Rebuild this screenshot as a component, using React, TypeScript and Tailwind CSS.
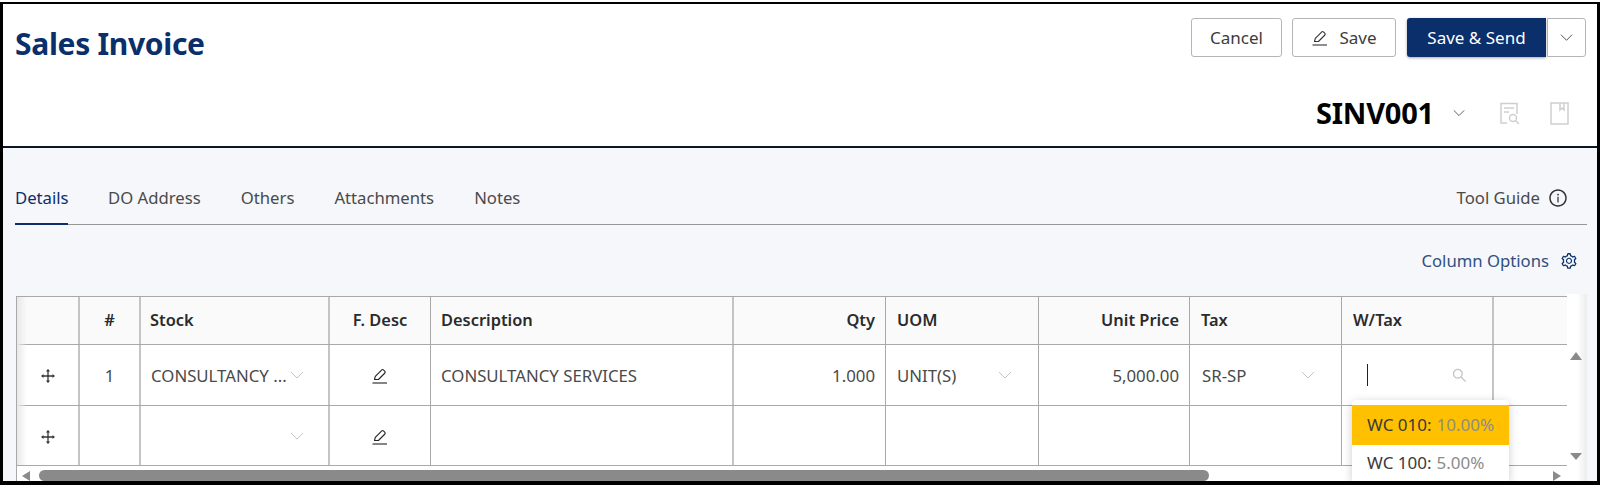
import React from "react";
import { AiOutlineDrag, AiOutlineSearch, AiOutlineSetting, AiOutlineInfoCircle } from "react-icons/ai";

const Chevron = ({ size = 14, color = "#c4c4c4", up = false }: { size?: number; color?: string; up?: boolean }) => (
  <svg width={size} height={size} viewBox="0 0 14 14" fill="none" stroke={color} strokeWidth="1" className={up ? "mb-[3px] shrink-0" : "shrink-0"}>
    <path d="M1 4 L7 10 L13 4" />
  </svg>
);

const Pencil = ({ size = 18, color = "#222" }: { size?: number; color?: string }) => (
  <svg width={size} height={size} viewBox="0 0 18 18" fill="none" stroke={color} strokeWidth="1.1">
    <path d="M3.5 12.5 L4.3 9.4 L10.8 2.9 Q11.6 2.2 12.4 2.9 L13.9 4.4 Q14.6 5.2 13.9 6 L7.4 12.5 Z" strokeLinejoin="round" />
    <path d="M1.5 16 H16" />
  </svg>
);

const DocSearch = () => (
  <svg width="21" height="23" viewBox="0 0 21 23" fill="none" stroke="#cfcfcf" strokeWidth="1.5">
    <path d="M8 21 H2 V1.5 H18 V12" />
    <path d="M5 6 H15 M5 10 H10" />
    <circle cx="14" cy="16" r="3.5" />
    <path d="M16.5 18.5 L20 22" />
  </svg>
);

const BookMark = () => (
  <svg width="19" height="23" viewBox="0 0 19 23" fill="none" stroke="#cfcfcf" strokeWidth="1.5">
    <rect x="1" y="1" width="17" height="21" />
    <path d="M10 1 V8 L12 6 L14 8 V1" />
  </svg>
);

const colClass =
  "grid grid-cols-[63px_61px_189px_101px_303px_152px_153px_151px_152px_152px_74px]";
const cell = "border-r border-[#a9a9a9] flex items-center min-w-0";
const thick = "border-r-2 border-[#c4c4c4] flex items-center min-w-0";
const head = "text-[16.4px] font-semibold text-[#2b2b2b]";
const body = "text-[16.8px] text-[#4a4a4a]";

const Move = () => <AiOutlineDrag size={18} color="#333" />;

function Header() {
  return (
    <div className={`${colClass} h-[48px] bg-[#fafafa] border-b border-[#a9a9a9] ${head}`}>
      <div className={thick} />
      <div className={`${thick} justify-center`}>#</div>
      <div className={`${thick} pl-[9px]`}>Stock</div>
      <div className={`${cell} justify-center`}>F. Desc</div>
      <div className={`${thick} pl-[10px]`}>Description</div>
      <div className={`${cell} justify-end pr-[10px]`}>Qty</div>
      <div className={`${cell} pl-[11px]`}>UOM</div>
      <div className={`${cell} justify-end pr-[10px]`}>Unit Price</div>
      <div className={`${cell} pl-[11px]`}>Tax</div>
      <div className={`${thick} pl-[11px]`}>W/Tax</div>
      <div />
    </div>
  );
}

function RowOne() {
  return (
    <div className={`${colClass} h-[61px] bg-white border-b border-[#a9a9a9] ${body}`}>
      <div className={`${thick} pt-[2px] justify-center`}><Move /></div>
      <div className={`${thick} pt-[2px] justify-center`}>1</div>
      <div className={`${thick} pt-[2px] pl-[10px] pr-[24px] justify-between`}>
        <span className="whitespace-nowrap">CONSULTANCY ...</span>
        <Chevron up />
      </div>
      <div className={`${cell} pt-[2px] justify-center`}><Pencil /></div>
      <div className={`${thick} pt-[2px] pl-[10px] whitespace-nowrap`}>CONSULTANCY SERVICES</div>
      <div className={`${cell} pt-[2px] justify-end pr-[10px]`}>1.000</div>
      <div className={`${cell} pt-[2px] pl-[11px] pr-[26px] justify-between`}>
        <span>UNIT(S)</span>
        <Chevron up />
      </div>
      <div className={`${cell} pt-[2px] justify-end pr-[10px]`}>5,000.00</div>
      <div className={`${cell} pt-[2px] pl-[12px] pr-[26px] justify-between`}>
        <span>SR-SP</span>
        <Chevron up />
      </div>
      <div className={`${thick} pl-[25px] pr-[24px] justify-between`}>
        <span className="w-px h-[22px] bg-[#222]" />
        <AiOutlineSearch size={17} color="#c4c4c4" />
      </div>
      <div />
    </div>
  );
}

function RowTwo() {
  return (
    <div className={`${colClass} h-[60px] bg-white border-b border-[#a9a9a9] ${body}`}>
      <div className={`${thick} pt-[2px] justify-center`}><Move /></div>
      <div className={thick} />
      <div className={`${thick} pr-[24px] justify-end`}><Chevron /></div>
      <div className={`${cell} pt-[2px] justify-center`}><Pencil /></div>
      <div className={thick} />
      <div className={cell} />
      <div className={cell} />
      <div className={cell} />
      <div className={cell} />
      <div className={thick} />
      <div />
    </div>
  );
}

export default function App() {
  return (
    <div className="relative w-[1600px] h-[485px] overflow-hidden bg-white pt-[2px] font-['Noto_Sans',sans-serif]">
      <div className="flex flex-col h-[483px] border-t-[2px] border-l-[3px] border-r-[3px] border-b-[4px] border-black">
        <header className="h-[142px] shrink-0 bg-white pl-[12px] pr-[11px] pt-[14px]">
          <div className="flex justify-between items-start">
            <h1 className="mt-[4px] text-[30px] leading-[44px] font-bold text-[#0a2f6b] tracking-[-0.3px]">Sales Invoice</h1>
            <div className="flex items-center h-[39px] text-[17px] text-[#3c3c3c]">
              <button className="w-[91px] h-[39px] border border-[#b5b5b5] rounded-[3px] bg-white">Cancel</button>
              <button className="ml-[10px] w-[104px] h-[39px] border border-[#b5b5b5] rounded-[3px] bg-white flex items-center justify-center gap-[10px]">
                <Pencil color="#333" /> Save
              </button>
              <button className="ml-[11px] w-[139px] h-[39px] rounded-l-[3px] bg-[#0a2f6b] text-white shadow-[0_1px_3px_rgba(0,0,0,0.35)]">Save &amp; Send</button>
              <button className="ml-[1px] w-[39px] h-[39px] border border-[#b5b5b5] rounded-r-[3px] bg-white flex items-center justify-center">
                <Chevron size={13} color="#444" />
              </button>
            </div>
          </div>
          <div className="flex justify-end items-center mt-[29px] pr-[17px] h-[36px]">
            <span className="text-[29px] font-bold text-black tracking-[-0.2px]">SINV001</span>
            <span className="ml-[19px] flex"><Chevron size={12} color="#444" /></span>
            <span className="ml-[34px] flex"><DocSearch /></span>
            <span className="ml-[30px] flex"><BookMark /></span>
          </div>
        </header>
        <div className="h-[2px] shrink-0 bg-[#0b1526]" />
        <main className="relative flex-1 min-h-0 bg-[#f5f7fb] pl-[12px] pr-[10px]">
          <div className="flex justify-between h-[77px] border-b border-[#969696] text-[16.7px] text-[#4a4a4a]">
            <div className="flex gap-[40px]">
              <div className="h-[77px] flex items-end pb-[13px] border-b-2 border-[#0a2f6b] -mb-px text-[#0a2f6b] w-[53px]">Details</div>
              <div className="flex items-end pb-[14px]">DO Address</div>
              <div className="flex items-end pb-[14px]">Others</div>
              <div className="flex items-end pb-[14px]">Attachments</div>
              <div className="flex items-end pb-[14px]">Notes</div>
            </div>
            <div className="flex items-end pb-[14px] gap-[8px] pr-[19px]">
              Tool Guide
              <AiOutlineInfoCircle size={20} color="#333" className="mb-[2px]" />
            </div>
          </div>
          <div className="flex justify-end items-center gap-[11px] h-[71px] pt-[1px] text-[16.7px] text-[#2f4f80] pr-[9px]">
            Column Options
            <AiOutlineSetting size={18} color="#0a2f6b" />
          </div>
          <div className="flex h-[185px]">
            <div className="relative w-[1552px] ml-px border-t border-l border-[#a9a9a9] overflow-hidden">
              <Header />
              <RowOne />
              <RowTwo />
              <div className="relative h-[16px] bg-white">
                <div className="absolute left-[5px] top-[5px] w-0 h-0 border-y-[5px] border-y-transparent border-r-[8px] border-r-[#8a8a8a]" />
                <div className="absolute left-[22px] top-[4px] w-[1170px] h-[11px] rounded-[6px] bg-[#8a8a8a]" />
                <div className="absolute right-[6px] top-[5px] w-0 h-0 border-y-[5px] border-y-transparent border-l-[8px] border-l-[#8a8a8a]" />
              </div>
              <div className="absolute left-0 top-0 bottom-[16px] w-[10px] bg-gradient-to-r from-[#e8e8e8] to-transparent" />
            </div>
            <div className="relative w-[20px] -mt-[2px] bg-gradient-to-r from-white via-white to-[#ececec]">
              <div className="absolute left-[3px] top-[58px] w-0 h-0 border-x-[6px] border-x-transparent border-b-[8px] border-b-[#8a8a8a]" />
              <div className="absolute left-[3px] top-[159px] w-0 h-0 border-x-[6px] border-x-transparent border-t-[7px] border-t-[#8a8a8a]" />
            </div>
          </div>
        </main>
      </div>
      <div className="absolute left-[1352px] top-[400px] w-[157px] h-[81px] pt-[5px] bg-white rounded-t-[4px] shadow-[0_2px_10px_rgba(0,0,0,0.2)] text-[17px]">
        <div className="h-[40px] bg-[#ffc000] pl-[15px] flex items-center text-[#3a3a3a] whitespace-nowrap">
          WC 010:<span className="ml-[5px] text-[#8c8c8c]">10.00%</span>
        </div>
        <div className="h-[36px] pl-[15px] flex items-center text-[#3a3a3a] whitespace-nowrap">
          WC 100:<span className="ml-[5px] text-[#8c8c8c]">5.00%</span>
        </div>
      </div>
    </div>
  );
}
